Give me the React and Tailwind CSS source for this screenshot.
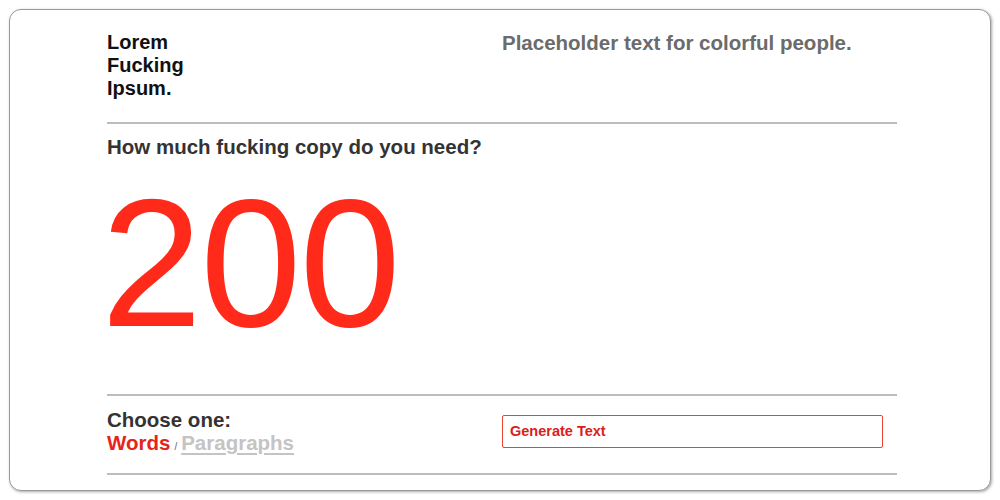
export default function App() {
  return (
    <div className="h-[500px] w-[1000px] bg-white p-[9px] font-['Liberation_Sans',Arial,sans-serif]">
      <div className="h-full rounded-[12px] border border-[#9a9a9a] shadow-[1px_1px_3px_rgba(0,0,0,0.35)] bg-white pl-[97px] pr-[93px] pt-[21px]">
        <header className="grid grid-cols-[395px_1fr] pb-[22px]">
          <h1 className="text-[20px] leading-[23px] font-bold text-[#111]">
            Lorem<br />Fucking<br />Ipsum.
          </h1>
          <p className="text-[20.5px] leading-[23px] font-bold text-[#6b6b6b]">Placeholder text for colorful people.</p>
        </header>
        <hr className="border-t-2 border-[#bdbdbd]" />
        <h2 className="mt-[11px] text-[20.5px] leading-[23px] font-bold text-[#333]">How much fucking copy do you need?</h2>
        <div className="h-[236px] -ml-[6px] text-[182px] leading-[210px] text-[#ff2a1a] tracking-[-2px]">200</div>
        <hr className="border-t-2 border-[#bdbdbd]" />
        <div className="grid grid-cols-[395px_1fr] pt-[12px] pb-[15px]">
          <div className="text-[20.5px] leading-[23px] font-bold">
            <div className="text-[#333]">Choose one:</div>
            <div className="flex items-baseline gap-[4px]">
              <span className="text-[#e8231a]">Words</span>
              <span className="text-[10px] text-[#666] font-normal">/</span>
              <span className="text-[#c4c4c4] underline underline-offset-[3px] decoration-2">Paragraphs</span>
            </div>
          </div>
          <div className="pt-[7px] pr-[14px]">
            <button className="w-full h-[33px] border border-[#e8442f] rounded-[2px] text-left pl-[7px] text-[14.5px] font-bold text-[#d9211a]">
              Generate Text
            </button>
          </div>
        </div>
        <hr className="border-t-2 border-[#bdbdbd]" />
      </div>
    </div>
  )
}
